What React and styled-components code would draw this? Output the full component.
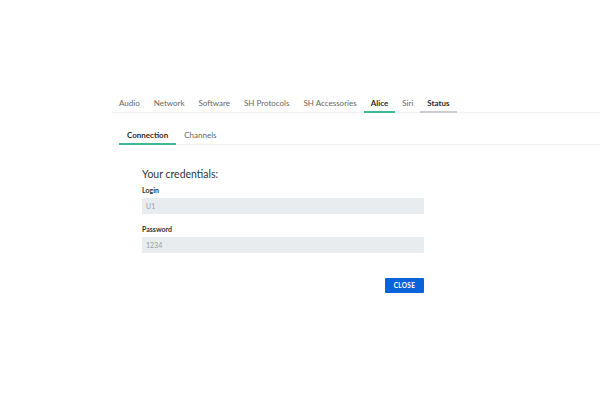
import React from "react";
import styled, { createGlobalStyle } from "styled-components";

const Global = createGlobalStyle`
  html, body { margin: 0; padding: 0; background: #fff; }
  body { font-family: "Source Sans Pro", Lato, "Open Sans", sans-serif; width: 600px; height: 407px; overflow: hidden; }
  * { box-sizing: border-box; }
`;

const Page = styled.div`
  padding: 95px 0 0 112px;
`;

const TabBar = styled.div`
  display: flex;
  align-items: flex-end;
  border-bottom: 1px solid #f1f1f1;
`;

const Tab = styled.div`
  padding: ${(p) => (p.$small ? "3px 7px 3px" : "6px 8px 3px")};
  font-size: 8px;
  line-height: 10px;
  color: ${(p) => (p.$active || p.$strong ? "#2b2b2b" : "#666")};
  font-weight: ${(p) => (p.$active || p.$strong ? 700 : 400)};
  border-bottom: 2px solid
    ${(p) => (p.$active ? "#3cb99b" : p.$strong ? "#c9ccd0" : "transparent")};
  margin-bottom: -1px;
  white-space: nowrap;
`;

const SubTabs = styled(TabBar)`
  margin-top: 11px;
  padding-left: 7px;
`;

const Content = styled.div`
  margin: 22px 0 0 30px;
  width: 282px;
  display: flex;
  flex-direction: column;
`;

const Title = styled.div`
  font-size: 10.5px;
  color: #333;
  line-height: 14px;
  margin-bottom: 4px;
`;

const Label = styled.div`
  font-size: 7px;
  font-weight: 700;
  color: #333;
  line-height: 10px;
  margin-bottom: 3px;
`;

const Field = styled.div`
  height: 16px;
  background: #e9ecef;
  color: #9aa0a6;
  font-size: 7px;
  line-height: 16px;
  padding: 0 4px;
  margin-bottom: ${(p) => p.$mb || 0}px;
`;

const Footer = styled.div`
  display: flex;
  justify-content: flex-end;
  margin-top: 25px;
`;

const Button = styled.button`
  width: 39px;
  height: 15px;
  border: none;
  border-radius: 1px;
  background: #0b63d8;
  color: #fff;
  font-family: inherit;
  font-size: 6.5px;
  font-weight: 700;
  letter-spacing: 0.3px;
  padding: 0;
`;

const topTabs = ["Audio", "Network", "Software", "SH Protocols", "SH Accessories", "Alice", "Siri", "Status"];

export default function App() {
  return (
    <>
      <Global />
      <Page>
        <TabBar>
          {topTabs.map((t) => (
            <Tab key={t} $active={t === "Alice"} $strong={t === "Status"} $small>
              {t}
            </Tab>
          ))}
        </TabBar>
        <SubTabs>
          <Tab $active>Connection</Tab>
          <Tab>Channels</Tab>
        </SubTabs>
        <Content>
          <Title>Your credentials:</Title>
          <Label>Login</Label>
          <Field $mb={10}>U1</Field>
          <Label>Password</Label>
          <Field>1234</Field>
          <Footer>
            <Button>CLOSE</Button>
          </Footer>
        </Content>
      </Page>
    </>
  );
}
